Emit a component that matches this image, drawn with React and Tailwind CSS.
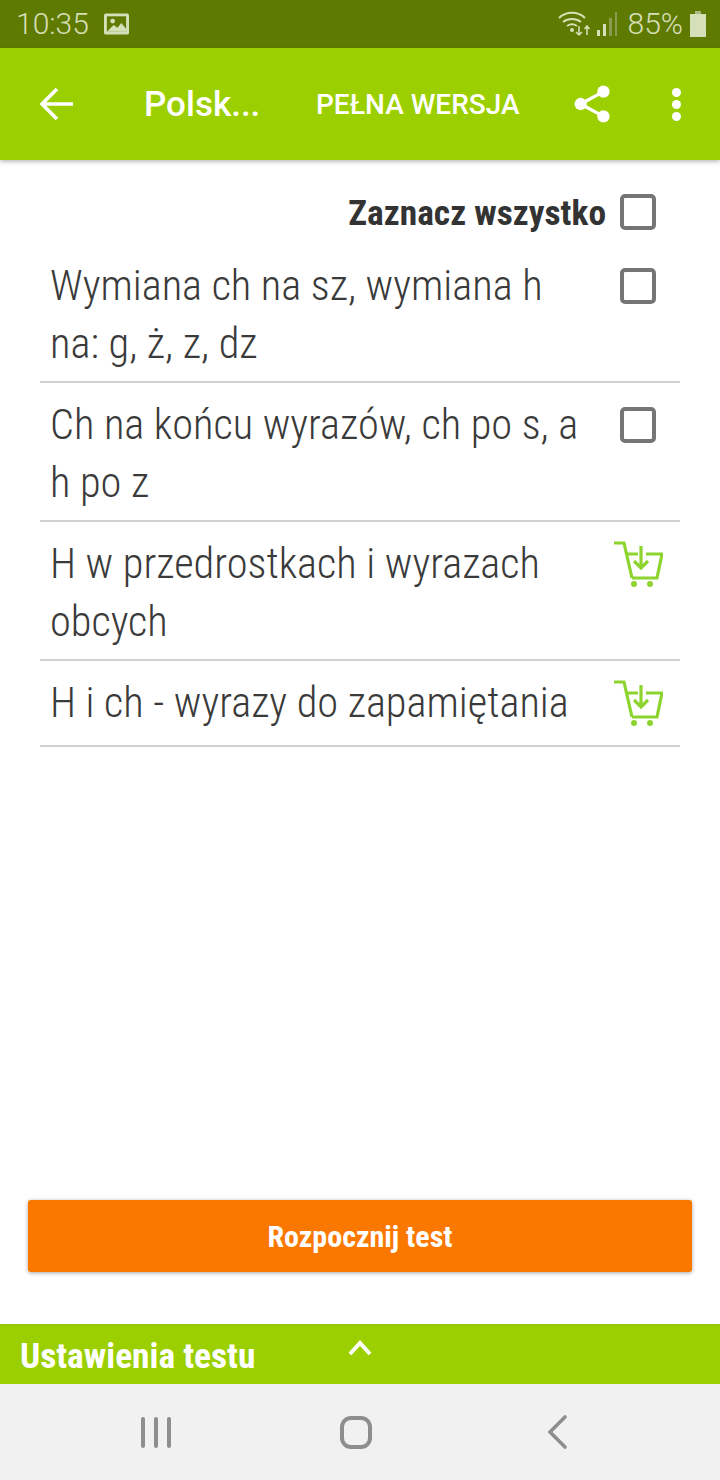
const condensed = "font-['Roboto',sans-serif] [font-stretch:75%]"

const rows = [
    { lines: ["Wymiana ch na sz, wymiana h", "na: g, ż, z, dz"], locked: false },
    { lines: ["Ch na końcu wyrazów, ch po s, a", "h po z"], locked: false },
    { lines: ["H w przedrostkach i wyrazach", "obcych"], locked: true },
    { lines: ["H i ch - wyrazy do zapamiętania"], locked: true },
]

const Checkbox = () => <div className="w-9 h-9 border-4 border-[#757575] rounded-[5px] shrink-0" />

const CartIcon = () => (
    <svg width="50" height="47" viewBox="0 0 50 47" fill="none" stroke="#8ed42f" strokeWidth="3.2">
        <path d="M1 2h10l8 35" />
        <path d="M14 13h11M33 13h16l-5 24H19" />
        <path d="M28 5v21M21 20l7 7 7-7" />
        <circle cx="21" cy="43" r="3" fill="#8ed42f" stroke="none" />
        <circle cx="37" cy="43" r="3" fill="#8ed42f" stroke="none" />
    </svg>
)

const StatusBar = () => (
    <div className="h-12 bg-[#5f7a00] flex items-center pl-4 pr-[14px] text-[#d5dfb8]">
        <span className="font-['Roboto',sans-serif] font-light text-[30px] leading-none">10:35</span>
        <svg className="ml-[15px]" width="25" height="22" viewBox="0 0 26 22">
            <rect width="26" height="22" rx="2" fill="#d5dfb8" />
            <rect x="3" y="3" width="20" height="16" fill="#5f7a00" />
            <circle cx="9" cy="8" r="2.5" fill="#d5dfb8" />
            <path d="M3 19l7-7 4 3 4-5 5 6v3z" fill="#d5dfb8" />
        </svg>
        <div className="flex-1" />
        <svg width="34" height="26" viewBox="0 0 34 26" fill="none" stroke="#d5dfb8" strokeWidth="2">
            <path d="M1 7c7-7 19-7 26 0M5 11c5-4 13-4 18 0M9 15c3-2 7-2 10 0" />
            <circle cx="14" cy="19" r="2" fill="#d5dfb8" stroke="none" />
            <path d="M21 15v9M18 21l3 3 3-3M29 24v-8M26.500 18l2.500-3 2.500 3" strokeWidth="1.500" />
        </svg>
        <svg className="ml-[4px]" width="22" height="30" viewBox="0 0 22 30">
            <rect x="1" y="21" width="3" height="6" fill="#d5dfb8" />
            <rect x="7" y="15" width="3" height="12" fill="#d5dfb8" />
            <rect x="13" y="9" width="3" height="18" fill="#8a9c4f" />
            <rect x="19" y="3" width="2" height="24" fill="#8a9c4f" />
        </svg>
        <span className="ml-[10px] font-['Roboto',sans-serif] font-light text-[30px] leading-none">85%</span>
        <svg className="ml-[7px]" width="16" height="26" viewBox="0 0 16 26">
            <rect x="5" y="0" width="6" height="3" fill="#a9b983" />
            <rect x="0" y="3" width="16" height="23" fill="#d5dfb8" />
        </svg>
    </div>
)

const Header = () => (
    <div className="h-28 bg-[#9bcf00] flex items-center text-white shadow-[0_2px_4px_rgba(0,0,0,0.25)] relative">
        <svg className="ml-[39px] shrink-0" width="35" height="34" viewBox="0 0 35 34" fill="none" stroke="white" strokeWidth="3.6">
            <path d="M34 17H3M18 2L3 17l15 15" />
        </svg>
        <span className="ml-[70px] w-[172px] font-['Roboto',sans-serif] font-medium text-[35px] leading-none">Polsk...</span>
        <span className="w-[203px] mt-[2px] font-['Roboto',sans-serif] font-medium text-[28px] leading-none whitespace-nowrap">PEŁNA WERSJA</span>
        <svg className="ml-[55px]" width="38" height="40" viewBox="0 0 40 40" fill="white">
            <circle cx="31" cy="7" r="6.500" />
            <circle cx="7" cy="20" r="6.500" />
            <circle cx="31" cy="33" r="6.500" />
            <path d="M7 20L31 7M7 20l24 13" stroke="white" strokeWidth="3.500" />
        </svg>
        <div className="ml-[60px] flex flex-col gap-[3px]">
            <div className="w-[9px] h-[9px] rounded-full bg-white" />
            <div className="w-[9px] h-[9px] rounded-full bg-white" />
            <div className="w-[9px] h-[9px] rounded-full bg-white" />
        </div>
    </div>
)

export default function App() {
    return (
        <div className="w-[720px] h-[1480px] bg-white flex flex-col overflow-hidden">
            <StatusBar />
            <Header />

            <div className="flex-1 px-10">
                <div className="flex items-center justify-end pt-5 pr-6 h-[84px]">
                    <span className={`${condensed} mt-[3px] font-bold text-[35.400px] text-[#333] leading-none mr-[14px]`}>Zaznacz wszystko</span>
                    <Checkbox />
                </div>
                {rows.map((row) => (
                    <div key={row.lines[0]} className="flex justify-between pt-[13px] pb-2 pl-[10px] border-b-[2px] border-[#d0d0d0] min-h-[86px] box-border">
                        <div className={`${condensed} font-light text-[42.400px] leading-[58px] text-[#3a3a3a] whitespace-nowrap`}>
                            {row.lines.map((line) => <div key={line}>{line}</div>)}
                        </div>
                        <div className="w-[84px] flex justify-center shrink-0">
                            {row.locked ? <div className="pt-[6px]"><CartIcon /></div> : <div className="pt-[11px]"><Checkbox /></div>}
                        </div>
                    </div>
                ))}
            </div>

            <div className="px-7 pb-[52px]">
                <button className={`${condensed} w-full h-[72px] rounded-[3px] bg-[#fb7800] text-white font-bold text-[30px] shadow-[0_1px_4px_rgba(0,0,0,0.35)]`}>
                    Rozpocznij test
                </button>
            </div>

            <div className="h-[60px] bg-[#9bcf00] border-t-2 border-[#96c80a] flex items-center pl-5 relative text-white">
                <span className={`${condensed} mt-[3px] font-bold text-[35.400px] leading-none`}>Ustawienia testu</span>
                <svg className="absolute left-[348px] top-[14px]" width="24" height="16" viewBox="0 0 24 16" fill="none" stroke="white" strokeWidth="4">
                    <path d="M2 14L12 3l10 11" />
                </svg>
            </div>

            <div className="h-24 bg-[#f1f1f1] flex items-center">
                <div className="ml-[141px] flex gap-[9px]">
                    <div className="w-[4px] h-[31px] rounded bg-[#8e8e8e]" />
                    <div className="w-[4px] h-[31px] rounded bg-[#8e8e8e]" />
                    <div className="w-[4px] h-[31px] rounded bg-[#8e8e8e]" />
                </div>
                <div className="ml-[169px] w-[32px] h-[33px] border-[4px] border-[#8e8e8e] rounded-[11px]" />
                <svg className="ml-[175px]" width="20" height="34" viewBox="0 0 20 34" fill="none" stroke="#8e8e8e" strokeWidth="3.6" strokeLinecap="round">
                    <path d="M18 2L3 17l15 15" />
                </svg>
            </div>
        </div>
    )
}
